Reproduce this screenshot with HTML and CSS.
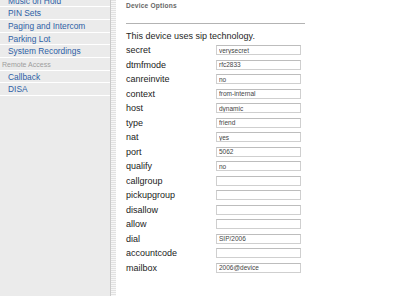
FILE: index.html
```html
<!DOCTYPE html>
<html lang="en">
<head>
    <meta charset="UTF-8">
    <title>Device Options</title>
    <link rel="stylesheet" href="styles.css">
</head>
<body>
    <div class="page">
        <!-- Left navigation -->
        <div class="sidebar">
            <ul class="nav">
                <li><a>Music on Hold</a></li>
                <li><a>PIN Sets</a></li>
                <li><a>Paging and Intercom</a></li>
                <li><a>Parking Lot</a></li>
                <li><a>System Recordings</a></li>
                <li class="nav-header">Remote Access</li>
                <li><a>Callback</a></li>
                <li><a>DISA</a></li>
            </ul>
        </div>
        <div class="sidebar-edge"></div>

        <!-- Device options form -->
        <div class="content">
            <h4 class="section-title">Device Options</h4>
            <hr class="section-rule">
            <p class="tech-note">This device uses sip technology.</p>
            <div class="options">
                <label>secret</label><input type="text" value="verysecret">
                <label>dtmfmode</label><input type="text" value="rfc2833">
                <label>canreinvite</label><input type="text" value="no">
                <label>context</label><input type="text" value="from-internal">
                <label>host</label><input type="text" value="dynamic">
                <label>type</label><input type="text" value="friend">
                <label>nat</label><input type="text" value="yes">
                <label>port</label><input type="text" value="5062">
                <label>qualify</label><input type="text" value="no">
                <label>callgroup</label><input type="text" value="">
                <label>pickupgroup</label><input type="text" value="">
                <label>disallow</label><input type="text" value="">
                <label>allow</label><input type="text" value="">
                <label>dial</label><input type="text" value="SIP/2006">
                <label>accountcode</label><input type="text" value="">
                <label>mailbox</label><input type="text" value="2006@device">
            </div>
        </div>
    </div>
</body>
</html>
```

FILE: styles.css
```css
html, body {
    margin: 0;
    height: 100%;
    background-color: #fff;
    font-family: 'Liberation Sans', Arial, sans-serif;
    overflow: hidden;
}

.page {
    display: flex;
    height: 100%;
}

.sidebar {
    width: 110px;
    flex-shrink: 0;
    background-color: #ebebeb;
}

.sidebar-edge {
    width: 5px;
    flex-shrink: 0;
    border-left: 1px solid #c9c9c9;
    background-color: #f1f1f1;
    background-image: repeating-linear-gradient(180deg, #e2e2e2 0 1px, #f7f7f7 1px 2px);
}

.nav {
    list-style: none;
    margin: -5.4px 0 0 0;
    padding: 0;
}

.nav li {
    height: 11.67px;
    line-height: 13px;
    border-bottom: 1px solid #fff;
    padding-left: 8px;
    font-size: 8.4px;
    white-space: nowrap;
}

.nav a {
    color: #2d5fa6;
    text-decoration: none;
}

.nav .nav-header {
    padding-left: 2px;
    font-size: 7px;
    color: #9d9d9d;
}

.content {
    padding-left: 10px;
    width: 180px;
}

.section-title {
    margin: 0;
    padding-top: 2px;
    font-size: 6.6px;
    line-height: 8px;
    font-weight: bold;
    color: #666;
    letter-spacing: 0.2px;
}

.section-rule {
    width: 179px;
    margin: 13px 0 0 0;
    border: none;
    border-top: 1px solid #b3b3b3;
}

.tech-note {
    margin: 6px 0 0 0;
    font-size: 9px;
    line-height: 13px;
    color: #1e1e1e;
    white-space: nowrap;
}

.options {
    display: grid;
    grid-template-columns: 90px 85px;
    grid-auto-rows: 14.53px;
    align-items: center;
}

.options label {
    font-size: 9px;
    color: #222;
}

.options input {
    box-sizing: border-box;
    width: 85px;
    height: 10px;
    margin: 0;
    padding: 0 0 0 2px;
    border: 1px solid #cfcfcf;
    border-top-color: #bdbdbd;
    background-color: #fff;
    font-family: 'Liberation Sans', Arial, sans-serif;
    font-size: 6.5px;
    color: #444;
    outline: none;
}
```
